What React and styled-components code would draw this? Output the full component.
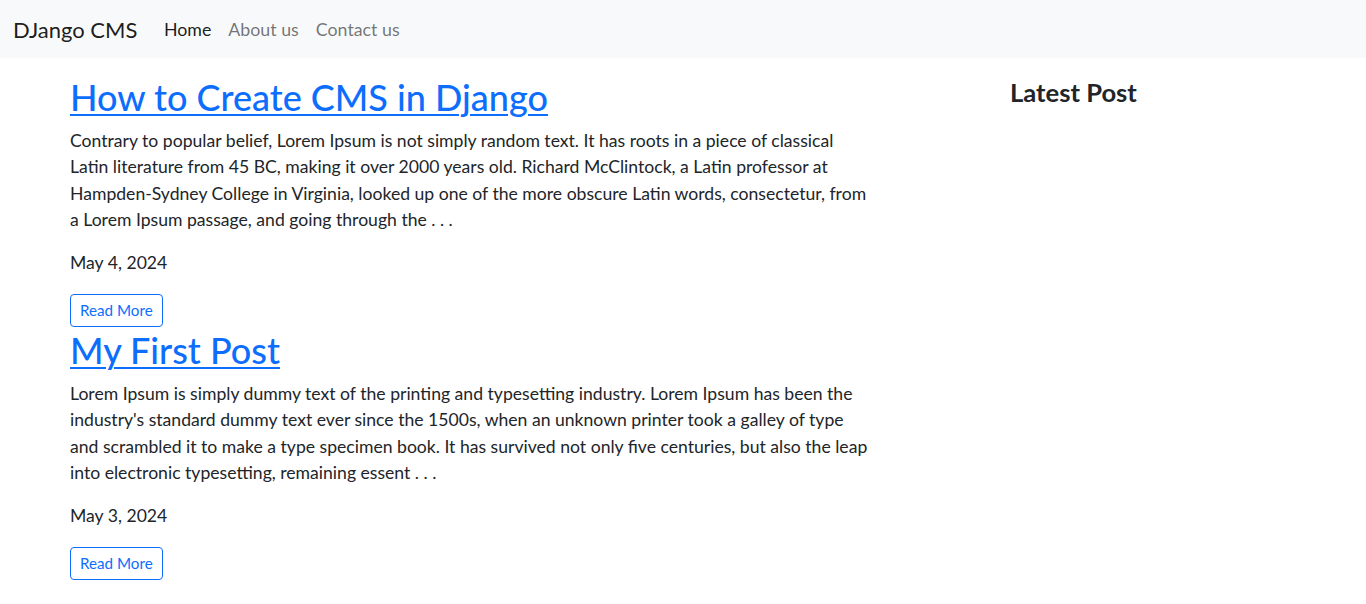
import React from 'react'
import styled, { createGlobalStyle } from 'styled-components'

const GlobalStyle = createGlobalStyle`
  * { box-sizing: border-box; }
  body {
    margin: 0;
    background: #fff;
    color: #212529;
    font-family: Lato, "Open Sans", sans-serif;
    font-size: 16px;
    line-height: 1.5;
  }
`

const Navbar = styled.nav`
  display: flex;
  align-items: center;
  height: 58px;
  padding: 0 12px 0 13px;
  background: #f8f9fa;
`

const Brand = styled.a`
  font-size: 22px;
  color: rgba(0, 0, 0, 0.9);
  text-decoration: none;
  margin-right: 18px;
`

const NavList = styled.ul`
  display: flex;
  list-style: none;
  margin: 0;
  padding: 0;
`

const NavLink = styled.a`
  display: block;
  padding: 8px 8.5px;
  font-size: 17.8px;
  text-decoration: none;
  color: ${({ $active }) => ($active ? 'rgba(0, 0, 0, 0.9)' : 'rgba(0, 0, 0, 0.55)')};
`

const Container = styled.div`
  max-width: 1320px;
  margin: 0 auto;
  display: grid;
  grid-template-columns: 880px 440px;
  padding-top: 16px;
`

const Main = styled.main`
  padding: 0 0 0 47px;
`

const Sidebar = styled.aside`
  padding: 3px 0 0 107px;
`

const SideTitle = styled.h3`
  margin: 0;
  font-size: 25.6px;
  font-weight: 700;
  line-height: 30px;
  color: #212529;
`

const Post = styled.article`
  display: flex;
  flex-direction: column;
  align-items: flex-start;
`

const Title = styled.h1`
  margin: 0 0 8px;
  font-size: 36px;
  font-weight: 500;
  line-height: 46px;
  a {
    color: #0d6efd;
    text-decoration: underline;
    text-underline-offset: 3px;
    text-decoration-thickness: 2px;
  }
`

const Excerpt = styled.p`
  margin: 0 0 16px;
  font-size: 17.6px;
  line-height: 26.4px;
`

const Line = styled.span`
  display: block;
  white-space: nowrap;
`

const PostDate = styled.p`
  margin: 0 0 18px;
  font-size: 17.6px;
  line-height: 26.4px;
`

const ReadMore = styled.a`
  display: inline-block;
  padding: 5px 9px;
  font-size: 15.2px;
  line-height: 21px;
  color: #0d6efd;
  border: 1px solid #0d6efd;
  border-radius: 4px;
  text-decoration: none;
`

const posts = [
  {
    title: 'How to Create CMS in Django',
    lines: [
      'Contrary to popular belief, Lorem Ipsum is not simply random text. It has roots in a piece of classical',
      'Latin literature from 45 BC, making it over 2000 years old. Richard McClintock, a Latin professor at',
      'Hampden-Sydney College in Virginia, looked up one of the more obscure Latin words, consectetur, from',
      'a Lorem Ipsum passage, and going through the . . .',
    ],
    date: 'May 4, 2024',
  },
  {
    title: 'My First Post',
    lines: [
      'Lorem Ipsum is simply dummy text of the printing and typesetting industry. Lorem Ipsum has been the',
      "industry's standard dummy text ever since the 1500s, when an unknown printer took a galley of type",
      'and scrambled it to make a type specimen book. It has survived not only five centuries, but also the leap',
      'into electronic typesetting, remaining essent . . .',
    ],
    date: 'May 3, 2024',
  },
]

const App = () => {
  return (
    <>
      <GlobalStyle />
      <Navbar>
        <Brand href="#">DJango CMS</Brand>
        <NavList>
          <li><NavLink $active href="#">Home</NavLink></li>
          <li><NavLink href="#">About us</NavLink></li>
          <li><NavLink href="#">Contact us</NavLink></li>
        </NavList>
      </Navbar>
      <Container>
        <Main>
          {posts.map((p) => (
            <Post key={p.title}>
              <Title><a href="#">{p.title}</a></Title>
              <Excerpt>
                {p.lines.map((l) => <Line key={l}>{l}</Line>)}
              </Excerpt>
              <PostDate>{p.date}</PostDate>
              <ReadMore href="#">Read More</ReadMore>
            </Post>
          ))}
        </Main>
        <Sidebar>
          <SideTitle>Latest Post</SideTitle>
        </Sidebar>
      </Container>
    </>
  )
}

export default App
